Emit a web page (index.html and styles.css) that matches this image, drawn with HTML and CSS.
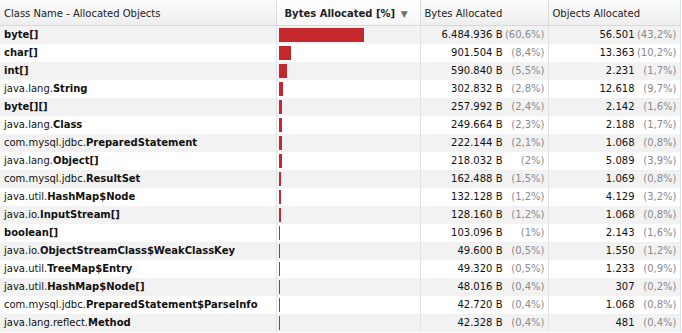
FILE: index.html
```html
<!DOCTYPE html>
<html lang="en">
<head>
  <meta charset="UTF-8">
  <title>Allocated Objects</title>
  <link rel="stylesheet" href="styles.css">
</head>
<body>

<table class="alloc-table">
  <colgroup>
    <col class="col-name">
    <col class="col-bar">
    <col class="col-bytes">
    <col class="col-objects">
  </colgroup>
  <thead>
    <tr>
      <th class="name-head">Class Name - Allocated Objects</th>
      <th class="sorted">Bytes Allocated [%] <span class="sort-arrow">&#9660;</span></th>
      <th>Bytes Allocated</th>
      <th>Objects Allocated</th>
    </tr>
  </thead>
  <tbody id="rows">
  </tbody>
</table>

<script>
  // name prefix, class name, bytes, bytes %, objects, objects %
  const data = [
    ['', 'byte[]', '6.484.936 B', 60.6, '56.501', '43,2%'],
    ['', 'char[]', '901.504 B', 8.4, '13.363', '10,2%'],
    ['', 'int[]', '590.840 B', 5.5, '2.231', '1,7%'],
    ['java.lang.', 'String', '302.832 B', 2.8, '12.618', '9,7%'],
    ['', 'byte[][]', '257.992 B', 2.4, '2.142', '1,6%'],
    ['java.lang.', 'Class', '249.664 B', 2.3, '2.188', '1,7%'],
    ['com.mysql.jdbc.', 'PreparedStatement', '222.144 B', 2.1, '1.068', '0,8%'],
    ['java.lang.', 'Object[]', '218.032 B', 2, '5.089', '3,9%'],
    ['com.mysql.jdbc.', 'ResultSet', '162.488 B', 1.5, '1.069', '0,8%'],
    ['java.util.', 'HashMap$Node', '132.128 B', 1.2, '4.129', '3,2%'],
    ['java.io.', 'InputStream[]', '128.160 B', 1.2, '1.068', '0,8%'],
    ['', 'boolean[]', '103.096 B', 1, '2.143', '1,6%'],
    ['java.io.', 'ObjectStreamClass$WeakClassKey', '49.600 B', 0.5, '1.550', '1,2%'],
    ['java.util.', 'TreeMap$Entry', '49.320 B', 0.5, '1.233', '0,9%'],
    ['java.util.', 'HashMap$Node[]', '48.016 B', 0.4, '307', '0,2%'],
    ['com.mysql.jdbc.', 'PreparedStatement$ParseInfo', '42.720 B', 0.4, '1.068', '0,8%'],
    ['java.lang.reflect.', 'Method', '42.328 B', 0.4, '481', '0,4%']
  ];

  const tbody = document.getElementById('rows');
  data.forEach(function (d) {
    const pct = String(d[3]).replace('.', ',') + '%';
    const width = Math.max(1, Math.round(d[3] * 1.41));
    const tr = document.createElement('tr');
    tr.innerHTML =
      '<td class="name">' + d[0] + '<b>' + d[1] + '</b></td>' +
      '<td class="bar-cell"><div class="bar" style="width:' + width + 'px"></div></td>' +
      '<td class="num"><span class="val">' + d[2] + '</span><span class="pct">(' + pct + ')</span></td>' +
      '<td class="num"><span class="val">' + d[4] + '</span><span class="pct">(' + d[5] + ')</span></td>';
    tbody.appendChild(tr);
  });
</script>

</body>
</html>
```

FILE: styles.css
```css
body {
  margin: 0;
  padding: 0;
  background: #ffffff;
  font-family: 'DejaVu Sans', Verdana, sans-serif;
  font-size: 10px;
  color: #111111;
}

.alloc-table {
  border-collapse: collapse;
  table-layout: fixed;
  width: 680px;
  border-right: 1px solid #dde3ef;
}

.col-name { width: 276px; }
.col-bar { width: 144px; }
.col-bytes { width: 128px; }
.col-objects { width: 132px; }

thead th {
  height: 24px;
  padding: 1px 0 0 4px;
  text-align: left;
  font-weight: normal;
  color: #222222;
  background: linear-gradient(#fbfbfb, #eeeeee);
  border-bottom: 1px solid #d8d8d8;
  border-left: 1px solid #dcdcdc;
  white-space: nowrap;
}

thead th.name-head {
  border-left: none;
}

thead th.sorted {
  font-weight: bold;
  padding-left: 8px;
  background: linear-gradient(#ffffff, #f6f6f6);
}

.sort-arrow {
  font-size: 9px;
  color: #6f6f6f;
  margin-left: 2px;
}

tbody tr {
  height: 18px;
}

tbody tr:nth-child(odd) {
  background: #f2f2f2;
}

tbody td {
  padding: 0;
  white-space: nowrap;
  overflow: hidden;
  border-left: 1px solid #dde3ef;
}

td.name {
  padding-left: 4px;
  border-left: none;
}

td.name b {
  font-weight: bold;
}

td.bar-cell {
  padding-left: 2px;
}

.bar {
  height: 14px;
  background: #c4282c;
}

td.num {
  text-align: right;
  padding-right: 3px;
}

.val {
  display: inline-block;
}

.pct {
  display: inline-block;
  width: 42px;
  text-align: right;
  color: #8a8a8a;
}
```
